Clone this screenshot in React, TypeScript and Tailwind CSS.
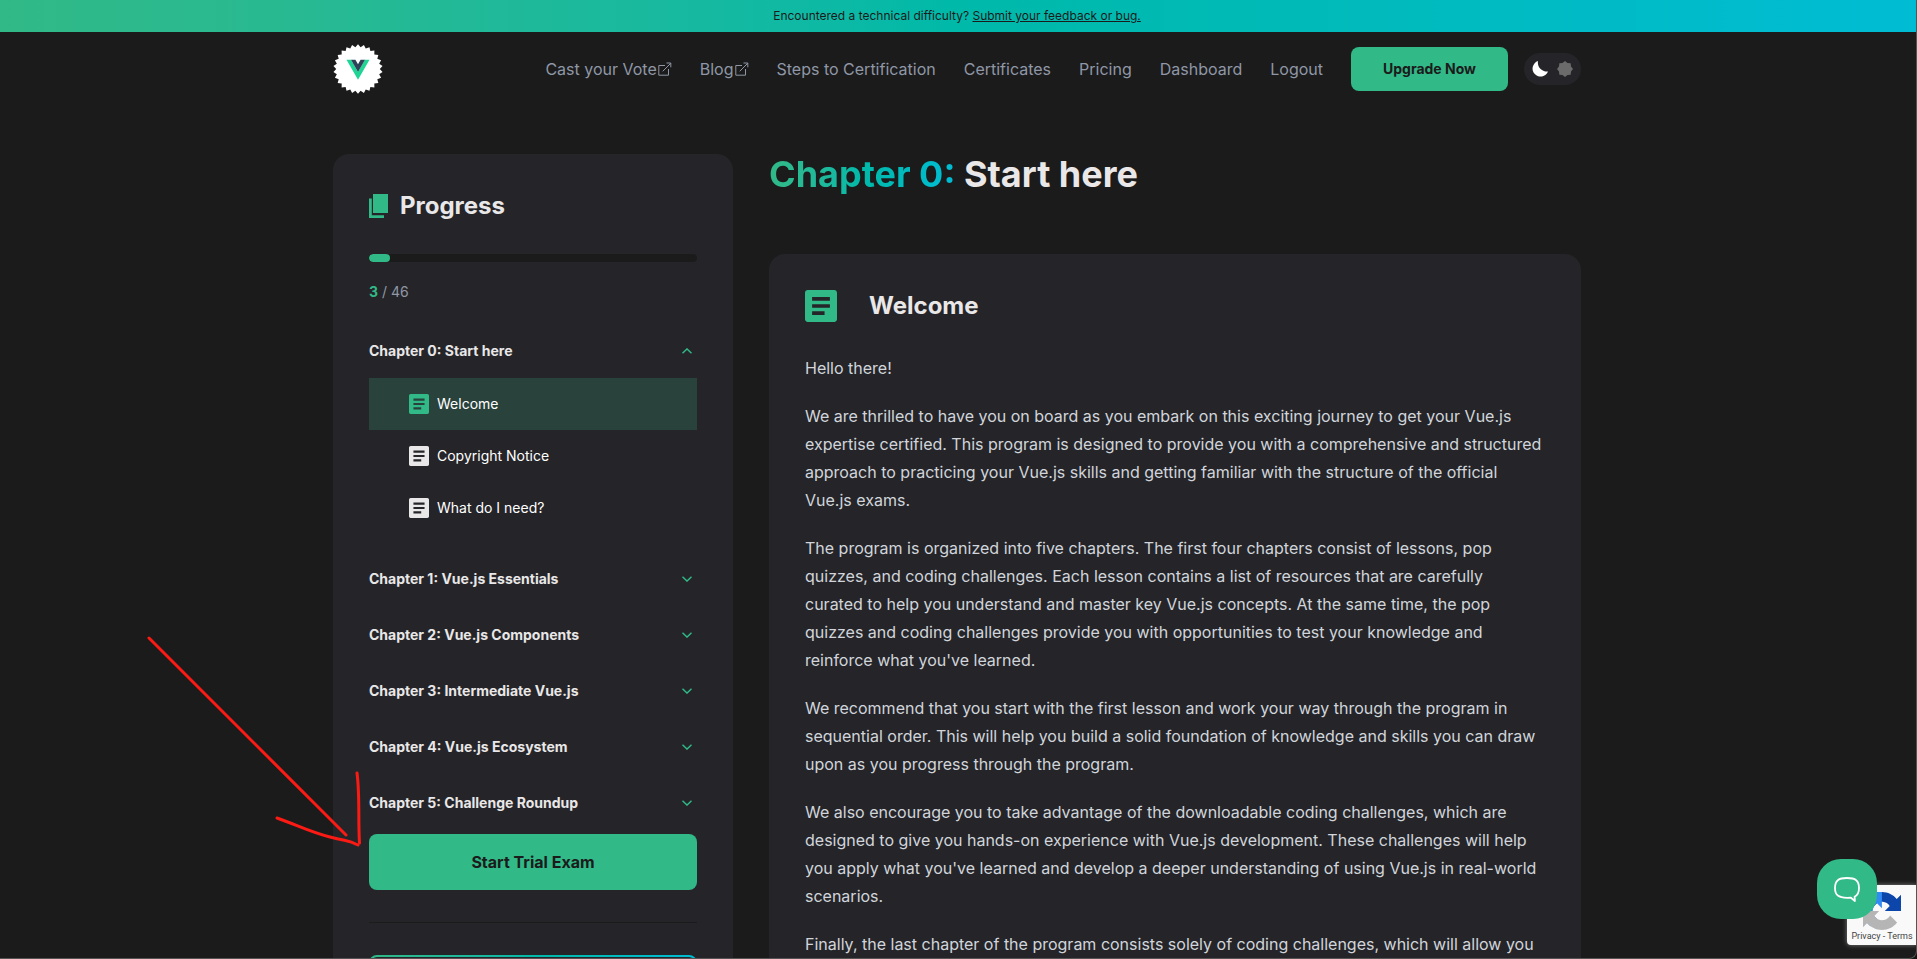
import React from "react";

const BRAND = "#31b987";

function starPoints(cx: number, cy: number, outer: number, inner: number, count: number): string {
  const points: string[] = [];
  for (let i = 0; i < count * 2; i++) {
    const r = i % 2 === 0 ? outer : inner;
    const a = (Math.PI * i) / count - Math.PI / 2;
    points.push(`${(cx + r * Math.cos(a)).toFixed(2)},${(cy + r * Math.sin(a)).toFixed(2)}`);
  }
  return points.join(" ");
}

function Logo() {
  return (
    <svg viewBox="0 0 50 50" className="size-[50px]" role="img" aria-label="Home">
      <polygon points={starPoints(25, 25, 24.7, 21.8, 26)} fill="#fff" />
      <path d="M13.500 15.800h4.600L25 28l6.900-12.200h4.600L25 35.800z" fill="#1fd596" />
      <path d="M18 15.800h4.400L25 20.200l2.600-4.400H32L25 28z" fill="#2f4358" />
    </svg>
  );
}

function ExternalIcon() {
  return (
    <svg viewBox="0 0 14 14" className="mb-px size-3.5" fill="none" stroke="currentColor" strokeWidth="1" aria-hidden="true">
      <path d="M7 3.500H.800v9.700h9.700V7M4.700 9.300L12.700 1.300M8.500 1h4.300v4.300" />
    </svg>
  );
}

function LessonIcon({ className }: { className: string }) {
  return (
    <svg viewBox="0 0 18 18" className={className} fill="currentColor" aria-hidden="true">
      <path d="M16.500 0h-15C.700 0 0 .700 0 1.500v15c0 .800.700 1.500 1.500 1.500h15c.800 0 1.500-.700 1.500-1.500v-15c0-.800-.700-1.500-1.500-1.500zM11 14H4v-2h7v2zm3-4H4V8h10v2zm0-4H4V4h10v2z" />
    </svg>
  );
}

function ChevronIcon({ up }: { up: boolean }) {
  return (
    <svg viewBox="0 0 10 6" className="h-1.5 w-2.5" fill="none" stroke={BRAND} strokeWidth="1.4" aria-hidden="true">
      <path d={up ? "M.5 5.300L5 .9l4.500 4.400" : "M.5.700L5 5.100 9.500.700"} />
    </svg>
  );
}

const NAV = [
  { label: "Cast your Vote", external: true },
  { label: "Blog", external: true },
  { label: "Steps to Certification" },
  { label: "Certificates" },
  { label: "Pricing" },
  { label: "Dashboard" },
  { label: "Logout" },
];

const LESSONS = ["Welcome", "Copyright Notice", "What do I need?"];

const CHAPTERS = [
  "Chapter 1: Vue.js Essentials",
  "Chapter 2: Vue.js Components",
  "Chapter 3: Intermediate Vue.js",
  "Chapter 4: Vue.js Ecosystem",
  "Chapter 5: Challenge Roundup",
];

const PARAGRAPHS = [
  "Hello there!",
  "We are thrilled to have you on board as you embark on this exciting journey to get your Vue.js expertise certified. This program is designed to provide you with a comprehensive and structured approach to practicing your Vue.js skills and getting familiar with the structure of the official Vue.js exams.",
  "The program is organized into five chapters. The first four chapters consist of lessons, pop quizzes, and coding challenges. Each lesson contains a list of resources that are carefully curated to help you understand and master key Vue.js concepts. At the same time, the pop quizzes and coding challenges provide you with opportunities to test your knowledge and reinforce what you've learned.",
  "We recommend that you start with the first lesson and work your way through the program in sequential order. This will help you build a solid foundation of knowledge and skills you can draw upon as you progress through the program.",
  "We also encourage you to take advantage of the downloadable coding challenges, which are designed to give you hands-on experience with Vue.js development. These challenges will help you apply what you've learned and develop a deeper understanding of using Vue.js in real-world scenarios.",
  "Finally, the last chapter of the program consists solely of coding challenges, which will allow you",
];

function ChapterHeading({ title, open = false }: { title: string; open?: boolean }) {
  return (
    <button
      type="button"
      aria-expanded={open}
      className="flex h-14 w-full items-center justify-between pr-[5px] text-left text-sm font-bold text-[#e9e7e7]"
    >
      {title}
      <ChevronIcon up={open} />
    </button>
  );
}

function Sidebar() {
  return (
    <aside className="w-[400px] shrink-0 rounded-2xl bg-[#252529] px-9 pt-[34px]">
      <h2 className="flex h-9 items-center gap-3 text-2xl font-bold text-[#e9e7e7]">
        <svg viewBox="0 0 19 24" className="h-6 w-[19px]" fill={BRAND} aria-hidden="true">
          <path d="M4 0h15v19H4zM0 4.500h2.800v16.700H15V24H0z" />
        </svg>
        Progress
      </h2>
      <div
        role="progressbar"
        aria-label="Lessons completed"
        aria-valuenow={3}
        aria-valuemax={46}
        className="mt-[30px] h-2 overflow-hidden rounded-full bg-[#1b1b1b]"
      >
        <div className="h-full rounded-full bg-[#31b987]" style={{ width: `${(3 / 46) * 100}%` }} />
      </div>
      <p className="mt-5 text-sm text-[#8f97a6]">
        <span className="font-bold text-[#31b987]">3</span> / 46
      </p>
      <div className="mt-[21px]">
        <ChapterHeading title="Chapter 0: Start here" open />
        <ul className="-mt-px mb-[17px]">
          {LESSONS.map((lesson, i) => (
            <li key={lesson}>
              <a
                href="#"
                className={
                  i === 0
                    ? "flex h-[52px] items-center gap-2 bg-[#29433c] pl-10 text-sm text-white"
                    : "flex h-[52px] items-center gap-2 pl-10 text-sm text-white"
                }
              >
                <LessonIcon className={i === 0 ? "size-5 text-[#31b987]" : "size-5 text-[#e9e7e7]"} />
                {lesson}
              </a>
            </li>
          ))}
        </ul>
        {CHAPTERS.map((chapter) => (
          <ChapterHeading key={chapter} title={chapter} />
        ))}
      </div>
      <button
        type="button"
        className="mt-[3px] h-14 w-full rounded-lg bg-[#31b987] text-base font-bold text-[#1b1b1b]"
      >
        Start Trial Exam
      </button>
      <hr className="mt-8 border-[#1b1b1b]" />
      <div className="mt-8 rounded-lg bg-linear-to-r from-[#31b987] via-[#00b9a9] to-[#00bcd4] p-0.5">
        <div className="h-32 rounded-md bg-[#252529]" />
      </div>
    </aside>
  );
}

function Lesson() {
  return (
    <main className="min-w-0 flex-1">
      <h1 className="text-4xl font-bold text-[#e9e7e7]">
        <span className="bg-linear-to-r from-[#31b987] via-[#00b9a9] via-50% to-[#00bcd4] bg-clip-text text-transparent">
          Chapter 0:
        </span>{" "}
        Start here
      </h1>
      <article className="mt-15 rounded-2xl bg-[#252529] p-9">
        <h2 className="flex h-8 items-center gap-8 text-2xl font-bold text-[#e9e7e7]">
          <LessonIcon className="size-8 text-[#31b987]" />
          Welcome
        </h2>
        <div className="mt-8 space-y-5 text-base leading-7 text-[#d1d5db]">
          {PARAGRAPHS.map((text) => (
            <p key={text}>{text}</p>
          ))}
        </div>
      </article>
    </main>
  );
}

function RecaptchaLogo() {
  return (
    <svg viewBox="0 0 64 64" className="size-[38px]" aria-hidden="true">
      <path
        d="M64 31.955l-.033-1.370V4.687l-7.160 7.160C50.948 4.674 42.033.093 32.050.093c-10.400 0-19.622 4.960-25.458 12.640l11.736 11.860a15.550 15.550 0 0 1 4.754-5.334c2.050-1.600 4.952-2.906 8.968-2.906.485 0 .860.057 1.135.163 4.976.393 9.288 3.140 11.828 7.124l-8.307 8.307L64 31.953"
        fill="#0c46ab"
      />
      <path
        d="M31.862.094l-1.370.033H4.594l7.160 7.160C4.580 13.147 0 22.060 0 32.046c0 10.400 4.960 19.622 12.640 25.458L24.500 45.768a15.550 15.550 0 0 1-5.334-4.754c-1.600-2.050-2.906-4.952-2.906-8.968 0-.485.057-.860.163-1.135.393-4.976 3.140-9.288 7.124-11.828l8.307 8.307L31.860.095"
        fill="#328bf2"
      />
      <path
        d="M.001 32.045l.033 1.370v25.898l7.160-7.160c5.860 7.173 14.774 11.754 24.760 11.754 10.400 0 19.622-4.960 25.458-12.640l-11.736-11.860a15.550 15.550 0 0 1-4.754 5.334c-2.050 1.600-4.952 2.906-8.968 2.906-.485 0-.860-.057-1.135-.163-4.976-.393-9.288-3.140-11.828-7.124l8.307-8.307L.001 32.040"
        fill="#b5b5b5"
      />
    </svg>
  );
}

export default function App() {
  return (
    <div
      className="relative h-screen overflow-hidden bg-[#1b1b1b]"
      style={{ fontFamily: 'Inter, "Liberation Sans", sans-serif' }}
    >
      <div className="flex h-8 items-center justify-center bg-linear-to-r from-[#31b987] via-[#00b9a9] to-[#00bcd4] pr-[3px] text-xs text-[#1b1b1b]">
        <p>
          Encountered a technical difficulty?{" "}
          <a href="#" className="underline">
            Submit your feedback or bug.
          </a>
        </p>
      </div>

      <div className="pr-[3px]">
        <div className="mx-auto max-w-[1248px]">
          <header className="flex h-[74px] items-center justify-between">
            <a href="#">
              <Logo />
            </a>
            <div className="flex items-center">
              <nav className="flex items-center gap-7 text-base text-[#8f97a6]">
                {NAV.map((item) => (
                  <a key={item.label} href="#" className="flex items-center gap-px">
                    {item.label}
                    {item.external && <ExternalIcon />}
                  </a>
                ))}
              </nav>
              <button
                type="button"
                className="ml-7 h-11 rounded-lg bg-[#31b987] px-8 text-sm font-bold text-[#1b1b1b]"
              >
                Upgrade Now
              </button>
              <button
                type="button"
                aria-label="Toggle colour theme"
                className="ml-4 flex h-8 items-center gap-[9px] rounded-full bg-[#252529] px-2"
              >
                <svg viewBox="0 0 16 16" className="size-4" fill="#fff" aria-hidden="true">
                  <path d="M6 0a9 9 0 0 0 10 10.500A8 8 0 1 1 6 0z" />
                </svg>
                <svg viewBox="0 0 16 16" className="size-4" fill="#6b6b6b" aria-hidden="true">
                  <polygon points={starPoints(8, 8, 8, 6.5, 8)} />
                </svg>
              </button>
            </div>
          </header>

          <div className="mt-12 flex items-start gap-9">
            <Sidebar />
            <Lesson />
          </div>
        </div>
      </div>

      <div className="absolute right-0 bottom-3.5 flex h-15 w-[70px] flex-col items-center justify-end rounded-l-sm bg-[#f9f9f9] pb-[3px] shadow-[0_0_5px_gray]">
        <RecaptchaLogo />
        <p
          className="text-[9px] leading-3 text-[#444]"
          style={{ fontFamily: 'Roboto, "Liberation Sans", sans-serif' }}
        >
          Privacy - Terms
        </p>
      </div>
      <button
        type="button"
        aria-label="Open chat"
        className="absolute right-10 bottom-10 flex size-15 items-center justify-center rounded-3xl bg-[#31b987]"
      >
        <svg viewBox="0 0 26 26" className="size-[26px]" fill="none" stroke="#fff" strokeWidth="1.8" strokeLinejoin="round" aria-hidden="true">
          <path d="M13 2C4.500 2 1 4.500 1 12c0 7.200 3.500 9.600 12 9.800 1.500 0 2.700 0 3.900-.1l4 3.300-.3-4.300C23.800 19.200 25 16.500 25 12c0-7.500-3.500-10-12-10z" />
        </svg>
      </button>

      <svg
        viewBox="0 0 220 216"
        className="pointer-events-none absolute top-[632px] left-[144px] h-[216px] w-[220px]"
        fill="none"
        stroke="#fb1b14"
        strokeWidth="3"
        strokeLinecap="round"
        aria-hidden="true"
      >
        <path d="M5 6L202 203" />
        <path d="M133 186c20 7 33 14 53 19s18 3 28 8" />
        <path d="M213 141c3 22 1 47 2.500 70" />
      </svg>

      <div className="pointer-events-none absolute inset-0 rounded-br-lg border-r border-b border-[#545454] shadow-[0_0_0_8px_#12160f]" />
    </div>
  );
}
